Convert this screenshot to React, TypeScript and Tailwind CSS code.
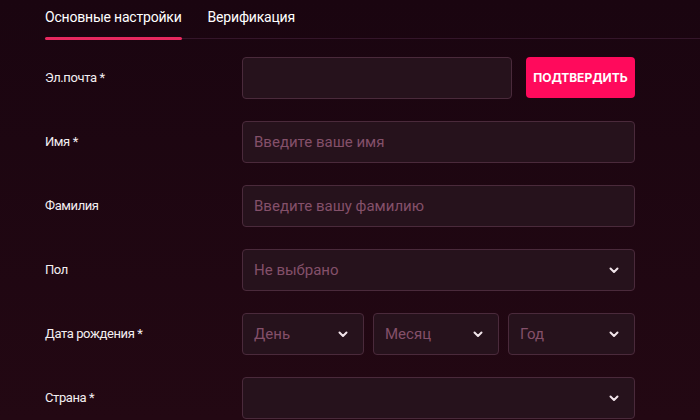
import React from 'react';

const Chevron = () => (
  <svg width="10" height="7" viewBox="0 0 10 7" fill="none" className="shrink-0">
    <path d="M1.5 1.5L5 5l3.5-3.5" stroke="#f1e4ea" strokeWidth="2" strokeLinecap="round" strokeLinejoin="round" />
  </svg>
);

const fieldCls =
  'h-[42px] rounded-[4px] border border-[#4a2a3b] bg-[#26121c] flex items-center px-[11px] text-[15px] text-[#84506a]';

const Select = ({ text, className = '' }: { text?: string; className?: string }) => (
  <div className={`${fieldCls} justify-between pr-[15px] ${className}`}>
    <span>{text}</span>
    <Chevron />
  </div>
);

const Row = ({ label, children }: { label: string; children: React.ReactNode }) => (
  <div className="flex items-center">
    <div className="w-[197px] text-[13px] tracking-[-0.4px] text-[#f3eef1]">{label}</div>
    <div className="w-[393px]">{children}</div>
  </div>
);

export default function App() {
  return (
    <div
      className="w-[700px] h-[420px] overflow-hidden bg-gradient-to-b from-[#1a0510] to-[#230813] px-[45px]"
      style={{ fontFamily: 'Roboto, "Noto Sans", sans-serif' }}
    >
      <div className="flex gap-[26px] border-b border-[#34162a] mr-[-45px] h-[39px]">
        <div className="relative pt-[7px] text-[14px] tracking-[-0.2px] text-white">
          Основные настройки
          <div className="absolute left-0 right-0 bottom-[-1.5px] h-[3px] rounded-full bg-[#e8285f]" />
        </div>
        <div className="pt-[7px] text-[14px] tracking-[-0.2px] text-white">Верификация</div>
      </div>

      <div className="flex flex-col gap-[22px] pt-[18px]">
        <Row label="Эл.почта *">
          <div className="flex gap-[14px]">
            <div className={`${fieldCls} flex-1`} />
            <button
              className="h-[41px] w-[109px] rounded-[4px] bg-[#ff0a5c] text-white text-[12px] font-bold uppercase"
              style={{ fontFamily: 'Inter, sans-serif' }}
            >
              Подтвердить
            </button>
          </div>
        </Row>
        <Row label="Имя *">
          <div className={fieldCls}>Введите ваше имя</div>
        </Row>
        <Row label="Фамилия">
          <div className={fieldCls}>Введите вашу фамилию</div>
        </Row>
        <Row label="Пол">
          <Select text="Не выбрано" />
        </Row>
        <Row label="Дата рождения *">
          <div className="flex gap-[9px]">
            <Select text="День" className="w-[122px]" />
            <Select text="Месяц" className="w-[126px]" />
            <Select text="Год" className="flex-1" />
          </div>
        </Row>
        <Row label="Страна *">
          <Select />
        </Row>
      </div>
    </div>
  );
}
